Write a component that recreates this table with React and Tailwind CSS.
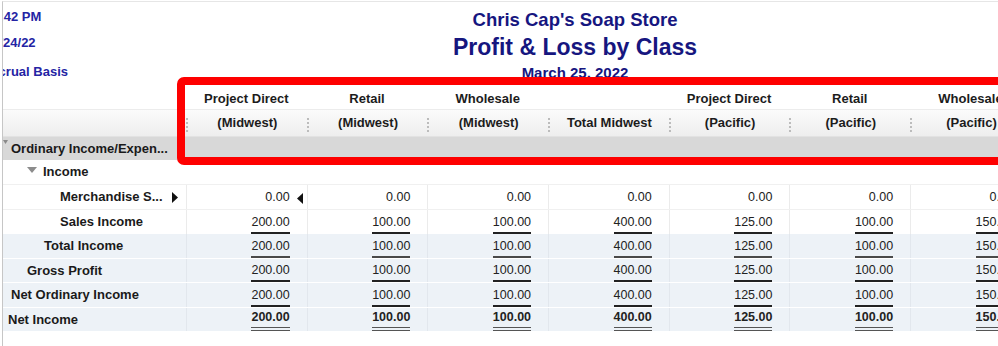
import React from "react";

const cols = [
  { h1: "Project Direct", h2: "(Midwest)" },
  { h1: "Retail", h2: "(Midwest)" },
  { h1: "Wholesale", h2: "(Midwest)" },
  { h1: "", h2: "Total Midwest" },
  { h1: "Project Direct", h2: "(Pacific)" },
  { h1: "Retail", h2: "(Pacific)" },
  { h1: "Wholesale", h2: "(Pacific)" },
];

const zeros = ["0.00", "0.00", "0.00", "0.00", "0.00", "0.00", "0.00"];
const vals = ["200.00", "100.00", "100.00", "400.00", "125.00", "100.00", "150.00"];

const GRID = "grid grid-cols-[183px_repeat(7,120.7px)]";

function LeftArrow() {
  return (
    <svg width="6" height="11" viewBox="0 0 6 11" className="ml-[7px] mb-[5px] shrink-0">
      <polygon points="6,0 6,11 0,5.5" fill="#111" />
    </svg>
  );
}

function RightArrow() {
  return (
    <svg width="6" height="11" viewBox="0 0 6 11" className="ml-[9px]">
      <polygon points="0,0 6,5.5 0,11" fill="#111" />
    </svg>
  );
}

function Num({ v, line, bold, arrow, blue }) {
  let b = "border-b-2 border-transparent";
  if (line === "single") b = "border-b-2 border-[#222]";
  if (line === "gray") b = "border-b-2 border-[#4a4a4a]";
  if (line === "double") b = "border-b-4 border-double border-[#555]";
  return (
    <div
      className={
        "flex items-end justify-end h-full border-l " +
        (blue ? "border-[#e2e7ed] " : "border-[#ebebeb] ") +
        (arrow ? "pr-[4px]" : "pr-[17px]")
      }
    >
      <span
        className={
          "inline-block leading-[15px] pb-[2px] text-[12.5px] text-[#222] " +
          (bold ? "font-bold " : "") +
          b
        }
      >
        {v}
      </span>
      {arrow && <LeftArrow />}
    </div>
  );
}

function BlueRow({ label, pl, line, bold }) {
  return (
    <div className={GRID + " h-[23.5px] bg-[#edf2f7]"}>
      <div
        className="flex items-center text-[13px] font-bold text-[#1a1a1a] whitespace-nowrap"
        style={{ paddingLeft: pl }}
      >
        {label}
      </div>
      {vals.map((v, i) => (
        <Num key={i} v={v} line={line} bold={bold} blue />
      ))}
    </div>
  );
}

export default function App() {
  return (
    <div className="relative w-[998px] h-[346px] overflow-hidden bg-white pt-[1px] pl-[2px] font-['Liberation_Sans',Arial,sans-serif]">
      <div className="h-full border-l border-t border-l-[#c6c6c6] border-t-[#e6e6e6]">
        {/* Top section */}
        <div className="flex h-[83px]">
          <div className="w-[197px] overflow-hidden flex flex-col text-[13px] font-bold text-[#2424a4] whitespace-nowrap">
            <div className="mt-[7px] leading-[16px] ml-[-18px]">10:42 PM</div>
            <div className="mt-[10px] leading-[16px] ml-[-18px]">03/24/22</div>
            <div className="mt-[13px] leading-[16px] ml-[-21px]">Accrual Basis</div>
          </div>
          <div className="w-[750px] flex flex-col items-center font-bold text-[#16167f] whitespace-nowrap">
            <div className="mt-[7px] text-[18.5px] leading-[22px]">Chris Cap's Soap Store</div>
            <div className="mt-[2px] text-[23px] leading-[28px]">Profit &amp; Loss by Class</div>
            <div className="mt-[3px] text-[15px] leading-[18px]">March 25, 2022</div>
          </div>
        </div>

        {/* Header row 1 */}
        <div className={GRID + " h-[24px]"}>
          <div />
          {cols.map((c, i) => (
            <div
              key={i}
              className="flex items-center justify-center pt-[4px] text-[13px] font-bold text-[#1c1c1c] whitespace-nowrap"
            >
              {c.h1}
            </div>
          ))}
        </div>

        {/* Header row 2 */}
        <div
          className={
            GRID +
            " h-[27px] border-t border-[#ececec] bg-gradient-to-b from-[#fbfbfb] to-[#eeeeee]"
          }
        >
          <div />
          {cols.map((c, i) => (
            <div key={i} className="flex items-center">
              <span className="w-0 h-[14px] mt-[3px] border-l-2 border-dotted border-[#bcbcbc]" />
              <span className="flex-1 text-center text-[13px] font-bold text-[#1c1c1c] whitespace-nowrap">
                {c.h2}
              </span>
            </div>
          ))}
        </div>

        {/* Gray band */}
        <div className="h-[24px] bg-[#d8d8d8] border-t border-[#e2e2e2] flex items-center relative">
          <svg width="5" height="4" viewBox="0 0 5 4" className="absolute left-0 top-[3px]">
            <polygon points="0,0 5,0 2.5,4" fill="#8a8a8a" />
          </svg>
          <span className="pl-[8px] text-[13px] font-bold text-[#1a1a1a] whitespace-nowrap">
            Ordinary Income/Expen...
          </span>
        </div>

        {/* Income row */}
        <div className="h-[25px] flex items-center border-b border-[#f0f0f0]">
          <svg width="10" height="6" viewBox="0 0 10 6" className="ml-[24px] mb-[4px]">
            <polygon points="0,0 10,0 5,6" fill="#8c8c8c" />
          </svg>
          <span className="ml-[6px] text-[13px] font-bold text-[#1a1a1a]">Income</span>
        </div>

        {/* Merchandise row */}
        <div className={GRID + " h-[25px] border-b border-[#f0f0f0]"}>
          <div className="flex items-center pl-[57px] text-[13px] font-bold text-[#1a1a1a] whitespace-nowrap">
            Merchandise S...
            <RightArrow />
          </div>
          {zeros.map((v, i) => (
            <Num key={i} v={v} arrow={i === 0} />
          ))}
        </div>

        {/* Sales Income row */}
        <div className={GRID + " h-[24px]"}>
          <div className="flex items-center pl-[57px] text-[13px] font-bold text-[#1a1a1a] whitespace-nowrap">
            Sales Income
          </div>
          {vals.map((v, i) => (
            <Num key={i} v={v} line="single" />
          ))}
        </div>

        {/* Blue total rows */}
        <div className="flex flex-col gap-[1px]">
          <BlueRow label="Total Income" pl="41px" line="gray" />
          <BlueRow label="Gross Profit" pl="24px" line="single" />
          <BlueRow label="Net Ordinary Income" pl="8px" line="single" />
          <BlueRow label="Net Income" pl="5px" line="double" bold />
        </div>
      </div>

      {/* Red annotation box */}
      <div className="absolute left-[177px] top-[77px] w-[850px] h-[88px] border-[8px] border-[#fe0000] rounded-[7px] pointer-events-none" />
    </div>
  );
}
